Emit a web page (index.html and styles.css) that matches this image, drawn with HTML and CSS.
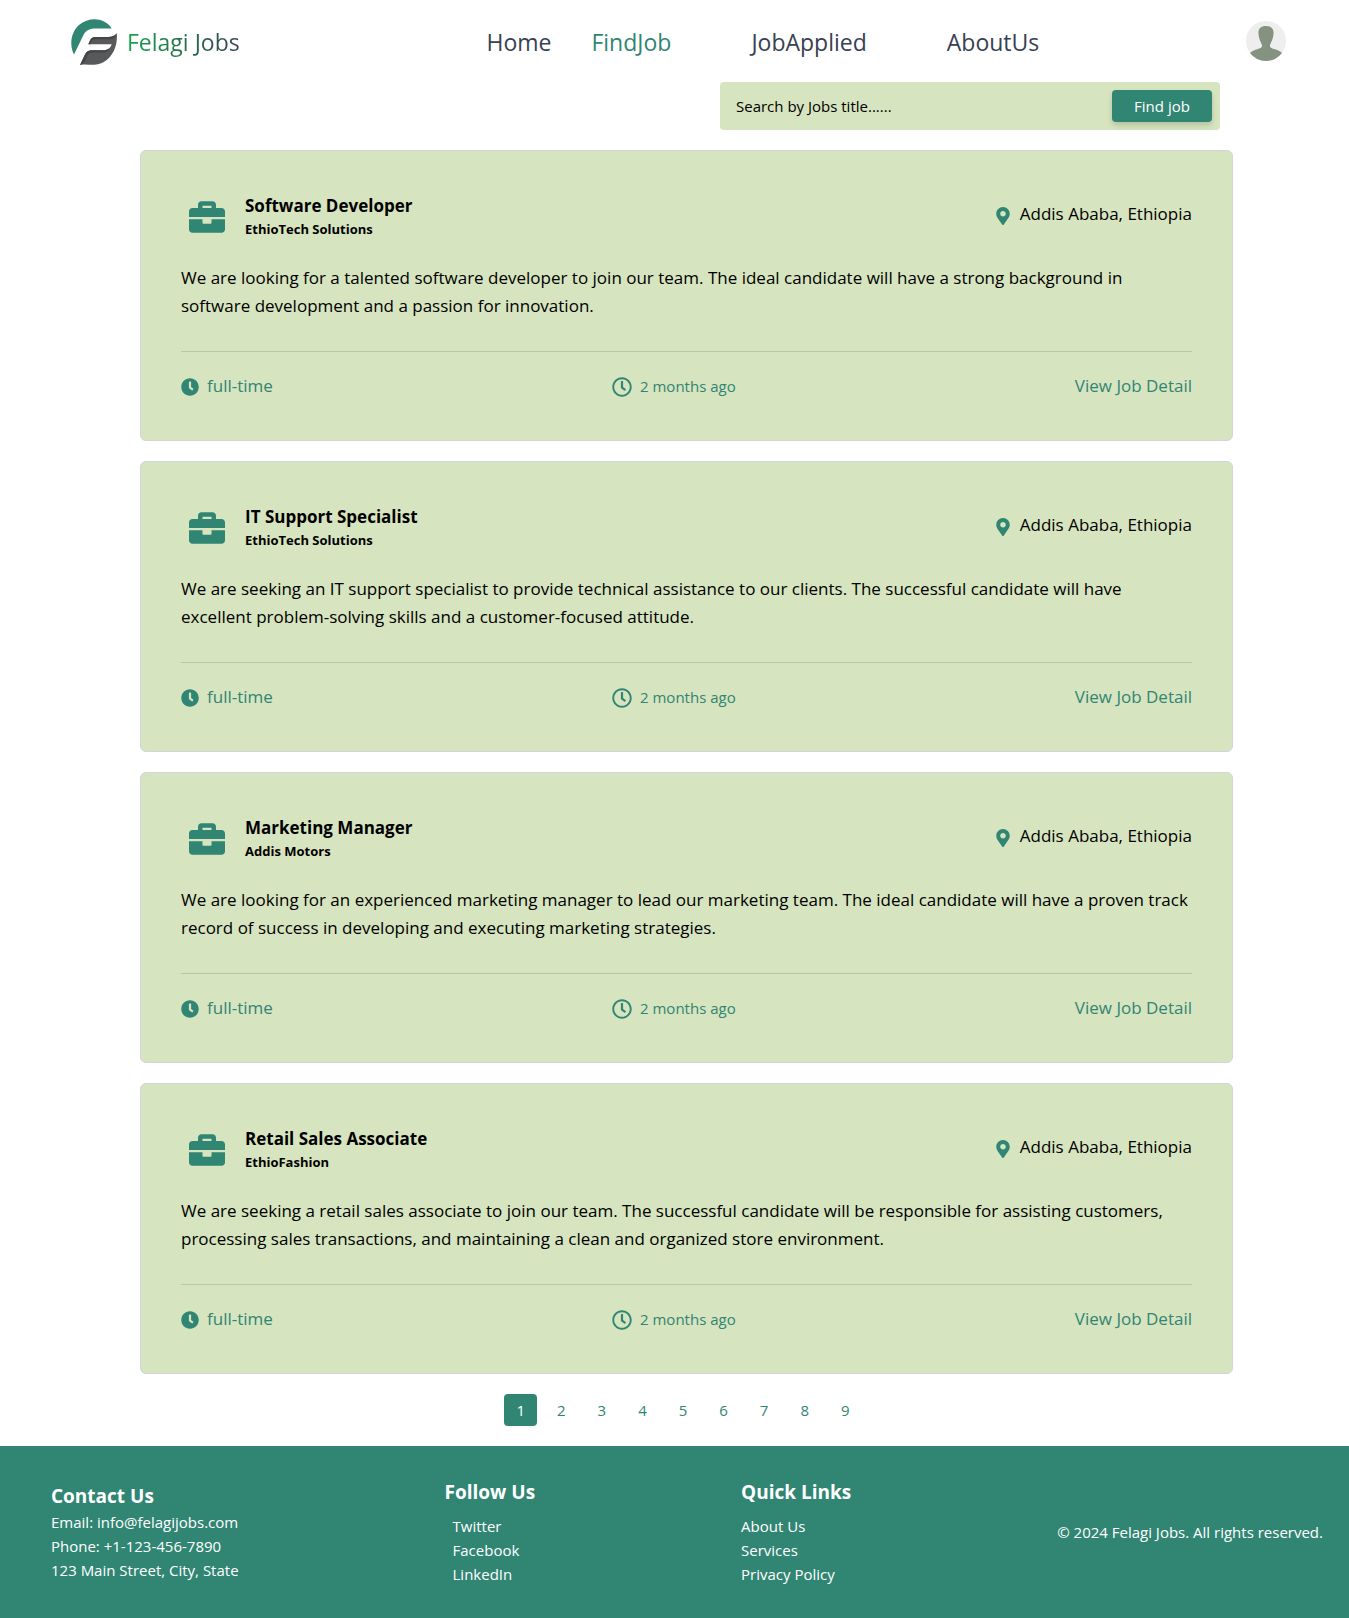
FILE: index.html
```html
<!DOCTYPE html>
<html lang="en">
<head>
<meta charset="utf-8">
<title>Felagi Jobs</title>
<link rel="stylesheet" href="styles.css">
</head>
<body>
<svg class="sprite" aria-hidden="true">
  <symbol id="briefcase" viewBox="0 0 512 512"><path d="M320 336c0 8.84-7.16 16-16 16h-96c-8.84 0-16-7.16-16-16v-48H0v144c0 25.6 22.4 48 48 48h416c25.6 0 48-22.4 48-48V288H320v48zm144-208h-80V80c0-25.6-22.4-48-48-48H176c-25.6 0-48 22.4-48 48v48H48c-25.6 0-48 22.4-48 48v80h512v-80c0-25.6-22.4-48-48-48zm-144 0H192V96h128v32z"/></symbol>
  <symbol id="pin" viewBox="0 0 384 512"><path d="M172.268 501.67C26.97 291.031 0 269.413 0 192 0 85.961 85.961 0 192 0s192 85.961 192 192c0 77.413-26.97 99.031-172.268 309.67-9.535 13.774-29.93 13.773-39.464 0zM192 272c44.183 0 80-35.817 80-80s-35.817-80-80-80-80 35.817-80 80 35.817 80 80 80z"/></symbol>
  <symbol id="clock-solid" viewBox="0 0 512 512"><path d="M256,8C119,8,8,119,8,256S119,504,256,504,504,393,504,256,393,8,256,8Zm92.49,313h0l-20,25a16,16,0,0,1-22.49,2.5h0l-67-49.72a40,40,0,0,1-15-31.23V112a16,16,0,0,1,16-16h32a16,16,0,0,1,16,16V256l58,42.5A16,16,0,0,1,348.49,321Z"/></symbol>
  <symbol id="clock-outline" viewBox="0 0 512 512"><path d="M256 8C119 8 8 119 8 256s111 248 248 248 248-111 248-248S393 8 256 8zm0 448c-110.500 0-200-89.500-200-200S145.500 56 256 56s200 89.500 200 200-89.500 200-200 200zm61.800-104.400l-84.900-61.700c-3.100-2.300-4.900-5.900-4.900-9.700V116c0-6.600 5.400-12 12-12h32c6.600 0 12 5.400 12 12v141.700l66.800 48.600c5.400 3.900 6.500 11.400 2.600 16.800L334.600 349c-3.900 5.300-11.400 6.500-16.800 2.600z"/></symbol>
</svg>

<header class="header">
  <a class="brand" href="#">
    <svg class="logo" viewBox="0 0 48 48" aria-hidden="true">
      <path fill="#318573" d="M4 36.500C-1 27 1 14 9 7C19-1 34-1 41.700 10.400H26C18 10.400 15 13 12.500 19Z"/>
      <path fill="#58595b" d="M46.700 15.300C48.500 31 39 46.500 24 46.800C19 47 15 46 10 47L15 36.500C16.500 33.500 18.500 32.300 21.700 32.300H33C38 32.300 40.500 30 41.700 26.300H18.300L20 22.500C21 20.400 22.500 19 25 19H38C42 19 45 18 46.700 15.300Z"/>
      <path fill="#454648" d="M46.700 15.300C46 19.500 43 21.300 39 21.300H26C22.500 21.300 21 23.500 20.500 26.300H18.300L20 22.500C21 20.400 22.500 19 25 19H38C42 19 45 18 46.700 15.300ZM10 47L15 36.500C16.500 33.500 18.500 32.300 21.700 32.300H33C36 32.300 38 31.500 39.500 30C38.500 33.500 36 34.600 33 34.600H22.500C18.500 34.600 17.500 37.500 16 41C14.500 44.500 13.500 46 10 47Z"/>
    </svg>
    <span class="brand-name">Felagi Jobs</span>
  </a>
  <nav class="nav">
    <a href="#">Home</a>
    <a href="#" class="active">FindJob</a>
    <a href="#" class="far">JobApplied</a>
    <a href="#" class="far">AboutUs</a>
  </nav>
  <button class="avatar" aria-label="Profile">
    <svg viewBox="0 0 40 40" aria-hidden="true">
      <circle cx="20" cy="20" r="20" fill="#eee"/>
      <path fill="#869280" d="M20 5C25.500 5 28 8 27.500 13C27 19 25 21 24 24C23.500 26.500 25 27 28 28C32 29 34 30 36 32A20 20 0 0 1 4 32C6 30 8 29 12 28C15 27 16.500 26.500 16 24C15 21 13 19 12.500 13C12 8 14.500 5 20 5Z"/>
    </svg>
  </button>
</header>

<main class="main">
  <form class="search">
    <input type="text" aria-label="Search by job title" placeholder="Search by Jobs title......">
    <button type="button">Find job</button>
  </form>

  <article class="card">
    <div class="card-head">
      <svg class="briefcase"><use href="#briefcase"/></svg>
      <div class="card-title"><h2>Software Developer</h2><h3>EthioTech Solutions</h3></div>
      <p class="location"><svg class="pin"><use href="#pin"/></svg>Addis Ababa, Ethiopia</p>
    </div>
    <p class="description">We are looking for a talented software developer to join our team. The ideal candidate will have a strong background in software development and a passion for innovation.</p>
    <div class="card-foot">
      <span class="type"><svg class="clock-solid"><use href="#clock-solid"/></svg>full-time</span>
      <span class="posted"><svg class="clock-outline"><use href="#clock-outline"/></svg>2 months ago</span>
      <a href="#">View Job Detail</a>
    </div>
  </article>

  <article class="card">
    <div class="card-head">
      <svg class="briefcase"><use href="#briefcase"/></svg>
      <div class="card-title"><h2>IT Support Specialist</h2><h3>EthioTech Solutions</h3></div>
      <p class="location"><svg class="pin"><use href="#pin"/></svg>Addis Ababa, Ethiopia</p>
    </div>
    <p class="description">We are seeking an IT support specialist to provide technical assistance to our clients. The successful candidate will have excellent problem-solving skills and a customer-focused attitude.</p>
    <div class="card-foot">
      <span class="type"><svg class="clock-solid"><use href="#clock-solid"/></svg>full-time</span>
      <span class="posted"><svg class="clock-outline"><use href="#clock-outline"/></svg>2 months ago</span>
      <a href="#">View Job Detail</a>
    </div>
  </article>

  <article class="card">
    <div class="card-head">
      <svg class="briefcase"><use href="#briefcase"/></svg>
      <div class="card-title"><h2>Marketing Manager</h2><h3>Addis Motors</h3></div>
      <p class="location"><svg class="pin"><use href="#pin"/></svg>Addis Ababa, Ethiopia</p>
    </div>
    <p class="description">We are looking for an experienced marketing manager to lead our marketing team. The ideal candidate will have a proven track record of success in developing and executing marketing strategies.</p>
    <div class="card-foot">
      <span class="type"><svg class="clock-solid"><use href="#clock-solid"/></svg>full-time</span>
      <span class="posted"><svg class="clock-outline"><use href="#clock-outline"/></svg>2 months ago</span>
      <a href="#">View Job Detail</a>
    </div>
  </article>

  <article class="card">
    <div class="card-head">
      <svg class="briefcase"><use href="#briefcase"/></svg>
      <div class="card-title"><h2>Retail Sales Associate</h2><h3>EthioFashion</h3></div>
      <p class="location"><svg class="pin"><use href="#pin"/></svg>Addis Ababa, Ethiopia</p>
    </div>
    <p class="description">We are seeking a retail sales associate to join our team. The successful candidate will be responsible for assisting customers, processing sales transactions, and maintaining a clean and organized store environment.</p>
    <div class="card-foot">
      <span class="type"><svg class="clock-solid"><use href="#clock-solid"/></svg>full-time</span>
      <span class="posted"><svg class="clock-outline"><use href="#clock-outline"/></svg>2 months ago</span>
      <a href="#">View Job Detail</a>
    </div>
  </article>
</main>

<nav class="pagination" aria-label="Pages">
  <button class="current">1</button>
  <button>2</button>
  <button>3</button>
  <button>4</button>
  <button>5</button>
  <button>6</button>
  <button>7</button>
  <button>8</button>
  <button>9</button>
</nav>

<footer class="footer">
  <section class="contact">
    <h4>Contact Us</h4>
    <p>Email: info@felagijobs.com</p>
    <p>Phone: +1-123-456-7890</p>
    <p>123 Main Street, City, State</p>
  </section>
  <section class="links">
    <h4>Follow Us</h4>
    <ul class="indented">
      <li><a href="#">Twitter</a></li>
      <li><a href="#">Facebook</a></li>
      <li><a href="#">LinkedIn</a></li>
    </ul>
  </section>
  <section class="links">
    <h4>Quick Links</h4>
    <ul>
      <li><a href="#">About Us</a></li>
      <li><a href="#">Services</a></li>
      <li><a href="#">Privacy Policy</a></li>
    </ul>
  </section>
  <p>© 2024 Felagi Jobs. All rights reserved.</p>
</footer>
</body>
</html>
```
FILE: styles.css
```css
* { box-sizing: border-box; margin: 0; padding: 0; }

:root {
  --green: #318573;
  --pale: #d6e4bf;
  --slate: #374151;
}

body {
  font-family: "Open Sans", "Noto Sans", sans-serif;
  font-size: 15px;
  line-height: 24px;
  color: #000;
  background: #fff;
}

a { color: inherit; text-decoration: none; }
button { font: inherit; border: 0; cursor: pointer; }
ul { list-style: none; }
svg { display: block; flex: none; fill: var(--green); }
.sprite { position: absolute; width: 0; height: 0; }

.header {
  display: flex;
  align-items: center;
  justify-content: space-between;
  height: 82px;
  padding: 0 63px 0 70px;
}
.brand { display: flex; align-items: center; gap: 9px; }
.logo { width: 48px; height: 48px; }
.brand-name {
  font-size: 23px;
  line-height: 32px;
  color: transparent;
  background: linear-gradient(to right, #16a34a, var(--slate));
  background-clip: text;
  -webkit-background-clip: text;
}
.nav {
  display: flex;
  gap: 40px;
  margin-left: 40px;
  font-size: 23px;
  line-height: 32px;
  color: var(--slate);
}
.brand, .nav { padding-top: 2px; }
.nav .active { color: var(--green); }
.nav .far { margin-left: 40px; }
.avatar { width: 40px; height: 40px; border-radius: 50%; background: none; }

.main {
  display: flex;
  flex-direction: column;
  gap: 20px;
  padding: 0 116px 0 140px;
}

.search {
  display: flex;
  align-items: center;
  align-self: flex-end;
  width: 500px;
  height: 48px;
  margin-right: 13px;
  padding: 8px 8px 8px 16px;
  border-radius: 4px;
  background: var(--pale);
}
.search input {
  flex: 1;
  min-width: 0;
  font: inherit;
  border: 0;
  outline: 0;
  background: none;
}
.search input::placeholder { color: #000; opacity: 1; }
.search button {
  width: 100px;
  height: 32px;
  border-radius: 4px;
  color: #fff;
  background: var(--green);
  box-shadow: 0 4px 6px rgba(0, 0, 0, .1), 0 2px 4px rgba(0, 0, 0, .06);
}

.card {
  padding: 40px;
  border: 1px solid #d1d5db;
  border-radius: 6px;
  background: var(--pale);
  font-size: 17px;
  line-height: 28px;
}
.card-head { display: flex; align-items: flex-start; }
.briefcase { width: 36px; height: 36px; margin: 8px 20px 0 8px; }
.card-title { flex: 1; padding-top: 1px; }
.card-title h2 { font-size: 17px; font-weight: 700; line-height: 28px; }
.card-title h3 { font-size: 13px; font-weight: 700; line-height: 18px; }
.location { display: flex; align-items: center; gap: 10px; margin-top: 9px; }
.pin { width: 14px; height: 18px; margin-top: 4px; }
.description { margin-top: 26px; }
.card-foot {
  display: flex;
  align-items: center;
  justify-content: space-between;
  margin-top: 31px;
  padding-top: 20px;
  border-top: 1px solid #b9c7a2;
  color: var(--green);
}
.card-foot span { display: flex; align-items: center; gap: 8px; }
.clock-solid { width: 18px; height: 18px; margin-top: 2px; }
.clock-outline { width: 20px; height: 20px; margin-top: 2px; }
.posted { font-size: 15px; }

.pagination {
  display: flex;
  justify-content: center;
  gap: 8px;
  padding: 20px 0 20px 17px;
}
.pagination button {
  height: 32px;
  padding: 0 12px;
  border-radius: 4px;
  color: var(--green);
  background: none;
}
.pagination .current { color: #fff; background: var(--green); }

.footer {
  display: flex;
  align-items: center;
  justify-content: space-between;
  padding: 32px 26px 32px 51px;
  color: #fff;
  background: var(--green);
}
.footer h4 { font-size: 19px; font-weight: 700; line-height: 28px; }
.links h4 { margin-bottom: 8px; }
.indented { padding-left: 8px; }
```
